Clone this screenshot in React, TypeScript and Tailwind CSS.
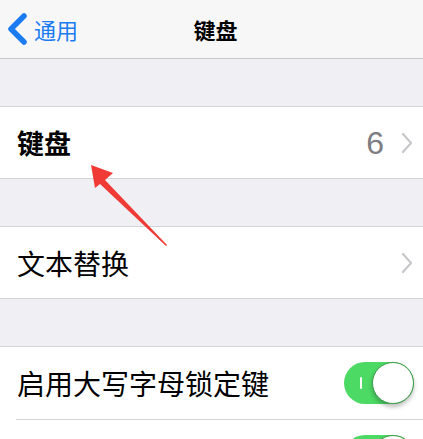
import React from 'react';

const font = { fontFamily: '"Noto Sans CJK SC", "Liberation Sans", sans-serif' };

const Chevron = () => (
  <svg width="12" height="22" viewBox="0 0 12 22" className="shrink-0">
    <path d="M2 2 L10 11 L2 20" fill="none" stroke="#c7c7cc" strokeWidth="2.2" strokeLinecap="round" strokeLinejoin="round" />
  </svg>
);

const Toggle = () => (
  <div className="relative w-[70px] h-[42px] rounded-full bg-[#4cd964] shrink-0">
    <div className="absolute left-[16px] top-[15px] w-[2px] h-[12px] bg-white rounded-full" />
    <div className="absolute right-0 top-0 w-[42px] h-[42px] rounded-full bg-white border border-[#3c9a4a] shadow-[0_3px_4px_rgba(0,0,0,0.25)]" />
  </div>
);

const Gap = () => <div className="h-[48px] bg-[#efeff4] border-b border-[#d4d4d8]" />;

export default function App() {
  return (
    <div className="relative w-[423px] h-[439px] overflow-hidden bg-[#efeff4]" style={font}>
      {/* Nav bar */}
      <div className="relative h-[59px] bg-[#f7f7f8] border-b border-[#c8c8cc] flex items-center">
        <div className="flex items-center pl-[6px] gap-[6px]">
          <svg width="22" height="34" viewBox="0 0 22 34">
            <path d="M18 4 L5 17 L18 30" fill="none" stroke="#1a7cf0" strokeWidth="5.5" strokeLinecap="round" strokeLinejoin="round" />
          </svg>
          <span className="text-[22px] leading-none text-[#1a7cf0]">通用</span>
        </div>
        <div className="absolute inset-0 flex items-center justify-center">
          <span className="text-[22px] font-bold leading-none text-black ml-[8px]">键盘</span>
        </div>
      </div>

      <Gap />

      <div className="h-[72px] bg-white border-b border-[#d4d4d8] flex items-center pl-[17px] pr-[10px]">
        <span className="flex-1 text-[27px] font-bold text-black leading-none">键盘</span>
        <span className="text-[32px] text-[#7d7d82] leading-none mr-[17px]" style={{ fontFamily: '"Liberation Sans", sans-serif' }}>6</span>
        <Chevron />
      </div>

      <Gap />

      <div className="h-[72px] bg-white border-b border-[#d4d4d8] flex items-center pl-[17px] pr-[10px]">
        <span className="flex-1 text-[28px] text-black leading-none">文本替换</span>
        <Chevron />
      </div>

      <Gap />

      <div className="bg-white">
        <div className="h-[72px] flex items-center pl-[17px] pr-[9px]">
          <span className="flex-1 text-[28px] text-black leading-none">启用大写字母锁定键</span>
          <Toggle />
        </div>
        <div className="ml-[16px] h-px bg-[#d4d4d8]" />
        <div className="h-[72px] flex items-start pl-[17px] pr-[9px] pt-[15px]">
          <span className="flex-1" />
          <Toggle />
        </div>
      </div>

      {/* Red annotation arrow */}
      <svg className="absolute left-0 top-0 pointer-events-none" width="423" height="439" viewBox="0 0 423 439">
        <polygon points="91,165 113,173 105,180 167,245 166,246 100,184 95,188" fill="#f03a35" />
      </svg>
    </div>
  );
}
